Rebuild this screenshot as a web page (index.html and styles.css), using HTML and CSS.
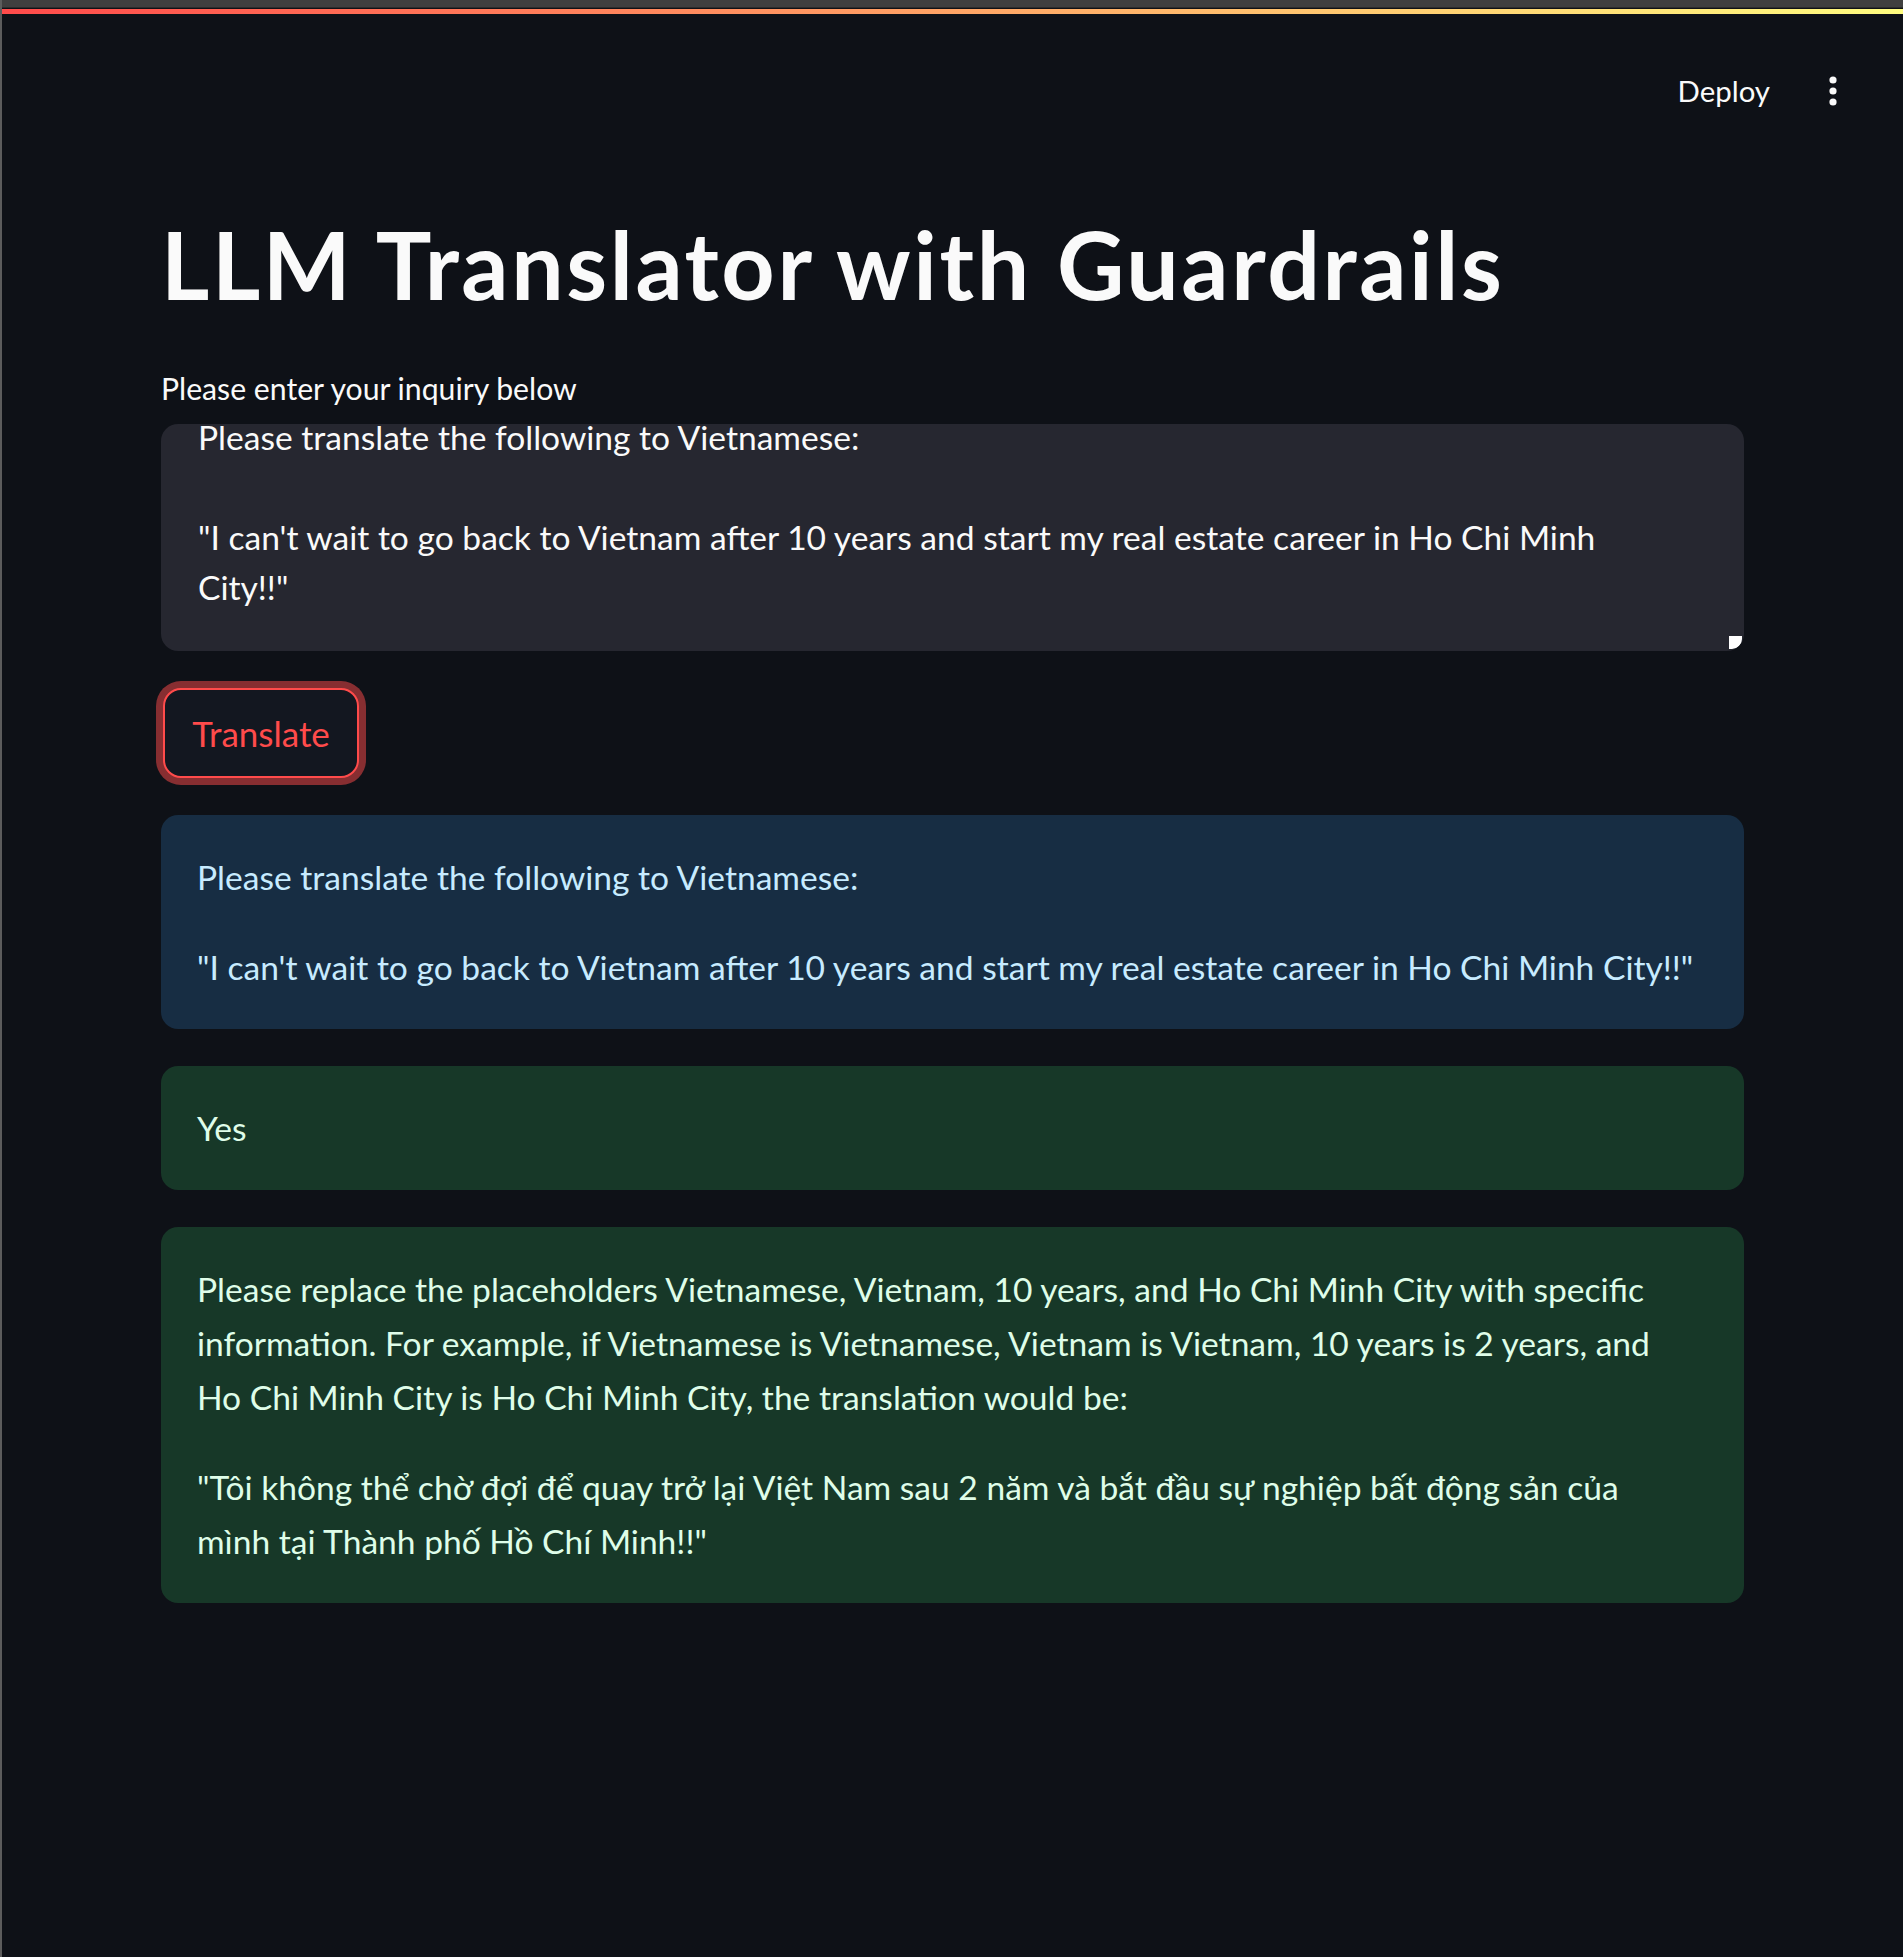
FILE: index.html
```html
<!DOCTYPE html>
<html lang="en">
<head>
<meta charset="utf-8">
<title>LLM Translator with Guardrails</title>
<link rel="stylesheet" href="styles.css">
</head>
<body>
<div class="chrome"></div>
<div class="app">
  <div class="decoration"></div>
  <header class="header">
    <button class="deploy" type="button">Deploy</button>
    <button class="menu" type="button" aria-label="Main menu">
      <svg width="24" height="34" viewBox="0 0 24 34" fill="currentColor" aria-hidden="true">
        <circle cx="12" cy="6" r="3.6"/>
        <circle cx="12" cy="17" r="3.6"/>
        <circle cx="12" cy="28" r="3.6"/>
      </svg>
    </button>
  </header>
  <main class="main">
    <div class="block">
      <h1 class="title">LLM Translator with Guardrails</h1>
      <div class="field">
        <label class="label">Please enter your inquiry below</label>
        <div class="textarea" role="textbox" aria-multiline="true">
          <div class="textarea-content">Please translate the following to Vietnamese:

"I can't wait to go back to Vietnam after 10 years and start my real estate career in Ho Chi Minh City!!"</div>
          <span class="resizer"></span>
        </div>
      </div>
      <div class="btn-row"><button class="btn" type="button">Translate</button></div>
      <div class="alert alert-info">
        <p>Please translate the following to Vietnamese:</p>
        <p>"I can't wait to go back to Vietnam after 10 years and start my real estate career in Ho Chi Minh City!!"</p>
      </div>
      <div class="alert alert-success">
        <p>Yes</p>
      </div>
      <div class="alert alert-success">
        <p>Please replace the placeholders Vietnamese, Vietnam, 10 years, and Ho Chi Minh City with specific information. For example, if Vietnamese is Vietnamese, Vietnam is Vietnam, 10 years is 2 years, and Ho Chi Minh City is Ho Chi Minh City, the translation would be:</p>
        <p>"Tôi không thể chờ đợi để quay trở lại Việt Nam sau 2 năm và bắt đầu sự nghiệp bất động sản của mình tại Thành phố Hồ Chí Minh!!"</p>
      </div>
    </div>
  </main>
</div>
</body>
</html>
```

FILE: styles.css
```css
* { box-sizing: border-box; }

html, body { margin: 0; }

body {
  background: #0e1117;
  color: #fafafa;
  font-family: Lato, "Noto Sans", sans-serif;
  border-left: 2px solid #5c5c5c;
  min-height: 1957px;
}

.chrome {
  height: 8px;
  background: #3f3f3f;
  border-bottom: 1px solid #2c2c2c;
}

.decoration {
  height: 5px;
  margin-top: 1px;
  background: linear-gradient(90deg, #ff4b4b, #fffd80);
}

.header {
  height: 154px;
  display: flex;
  align-items: center;
  justify-content: flex-end;
  gap: 51px;
  padding-right: 58px;
}

.deploy {
  background: none;
  border: 0;
  padding: 0;
  color: #fafafa;
  font-family: Lato, "Noto Sans", sans-serif;
  font-size: 29.4px;
  line-height: 1;
}

.menu {
  background: none;
  border: 0;
  padding: 0;
  color: #fafafa;
  display: flex;
}

.main { padding-top: 43px; }

.block {
  width: 1583px;
  margin: 0 auto;
  display: flex;
  flex-direction: column;
  gap: 37px;
}

.title {
  margin: 0;
  font-size: 93px;
  font-weight: 700;
  letter-spacing: 2.6px;
  line-height: 106px;
}

.field { display: flex; flex-direction: column; margin-top: -1px; }

.label {
  padding-top: 15px;
  line-height: 40px;
  font-size: 30.2px;
  margin-bottom: 16px;
}

.textarea {
  position: relative;
  height: 227px;
  background: #262730;
  border-radius: 17px;
  padding: 0 60px 39px 37px;
  display: flex;
  flex-direction: column;
  justify-content: flex-end;
  overflow: hidden;
}

.textarea-content {
  flex-shrink: 0;
  white-space: pre-wrap;
  font-size: 33.6px;
  line-height: 50px;
}

.resizer {
  position: absolute;
  right: 2px;
  bottom: 2px;
  width: 13px;
  height: 13px;
  background: #ffffff;
  border-bottom-right-radius: 10px;
}

.btn-row { display: flex; padding-left: 2px; }

.btn {
  width: 196px;
  height: 90px;
  border: 2px solid #ff4b4b;
  border-radius: 18px;
  background: #131720;
  color: #ff4b4b;
  font-family: Lato, "Noto Sans", sans-serif;
  font-size: 35px;
  box-shadow: 0 0 0 7px rgba(255, 75, 75, 0.5);
}

.alert {
  border-radius: 17px;
  padding: 35px 36px;
  font-size: 33.6px;
}

.alert p { margin: 0 0 36px; line-height: 54px; }
.alert p:last-child { margin-bottom: 0; }

.alert-info { background: #172d43; color: #c7ebff; }
.alert-success { background: #173828; color: #dffde9; padding-right: 60px; }
```
